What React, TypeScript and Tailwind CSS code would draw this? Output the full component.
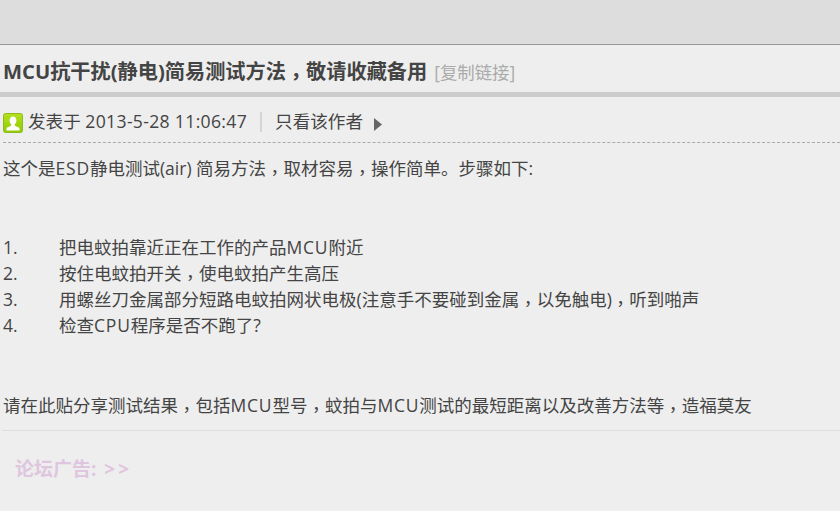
const C = () => <span className="inline-block translate-y-[0.24em] font-['Noto_Sans_CJK_TC',sans-serif]">，</span>;
const L = ({ t }: { t: string }) => <span className="tracking-[0.8px]">{t}</span>;

export default function App() {
  return (
    <div className="w-[840px] h-[511px] overflow-hidden bg-[#eeeeee] text-[#444444] font-['Open_Sans','Noto_Sans_CJK_SC',sans-serif]">
      <div className="h-[45px] bg-[#dddddd] border-b border-[#999999]" />
      <div className="h-[47px] pl-[3px] flex items-center pt-[6px]">
        <h1 className="text-[20.200px] font-bold text-[#444444]">MCU抗干扰(静电)简易测试方法<C />敬请收藏备用</h1>
        <span className="ml-[7px] mt-[1px] text-[17.400px] text-[#aaaaaa]">[复制链接]</span>
      </div>
      <div className="h-[5px] bg-[#cccccc]" />
      <div className="h-[46px] ml-[3px] flex items-center pt-[4px] text-[#444444] text-[17.600px] border-b border-dashed border-[#aaaaaa]">
        <svg width="20" height="20" viewBox="0 0 20 20" className="shrink-0 mt-[3px]">
          <defs>
            <linearGradient id="g" x1="0" y1="0" x2="0" y2="1">
              <stop offset="0" stopColor="#b4e020" />
              <stop offset="1" stopColor="#8fcc00" />
            </linearGradient>
          </defs>
          <rect x="0.5" y="0.5" width="19" height="19" rx="2" fill="url(#g)" stroke="#8dbb1e" />
          <path d="M10 3.5c2.2 0 3.400 1.800 3.400 4 0 1.600-.7 3-1.600 3.800v1.200c.6.800 3.400 1.400 4.700 2.600v2.400H3.500v-2.400c1.300-1.200 4.100-1.800 4.700-2.600v-1.200C7.300 10.500 6.600 9.100 6.600 7.500c0-2.200 1.200-4 3.400-4z" fill="#ffffff" />
        </svg>
        <span className="ml-[5px]">发表于 <span className="tracking-[0.32px]">2013-5-28 11:06:47</span></span>
        <span className="ml-[13px] mt-[1px] w-[2px] h-[20px] bg-[#d5d5d5]" />
        <span className="ml-[13px]">只看该作者</span>
        <svg width="8" height="13" viewBox="0 0 8 13" className="ml-[11px] mt-[5px]">
          <path d="M0 0l8 6.500-8 6.500z" fill="#666666" />
        </svg>
      </div>
      <div className="ml-[3px] pt-[12px] text-[17.500px] leading-[26.100px] text-[#444444]">
        <p>这个是<L t="ESD" />静电测试(air) 简易方法<C />取材容易<C />操作简单。步骤如下:</p>
        <div className="h-[53px]" />
        <div className="flex"><span className="w-[56px] shrink-0">1.</span><span>把电蚊拍靠近正在工作的产品<L t="MCU" />附近</span></div>
        <div className="flex"><span className="w-[56px] shrink-0">2.</span><span>按住电蚊拍开关<C />使电蚊拍产生高压</span></div>
        <div className="flex"><span className="w-[56px] shrink-0">3.</span><span>用螺丝刀金属部分短路电蚊拍网状电极(注意手不要碰到金属<C />以免触电)<C />听到啪声</span></div>
        <div className="flex"><span className="w-[56px] shrink-0">4.</span><span>检查<L t="CPU" />程序是否不跑了?</span></div>
        <div className="h-[54px]" />
        <p>请在此贴分享测试结果<C />包括<L t="MCU" />型号<C />蚊拍与<L t="MCU" />测试的最短距离以及改善方法等<C />造福莫友</p>
      </div>
      <div className="mt-[11px] ml-[2px] border-t border-[#dddddd] pl-[13px] pt-[25px] text-[19px] leading-[27px] font-bold text-[#dfc6de]">
        论坛广告: <span className="ml-[3px] tracking-[3px]">&gt;&gt;</span>
      </div>
    </div>
  );
}
